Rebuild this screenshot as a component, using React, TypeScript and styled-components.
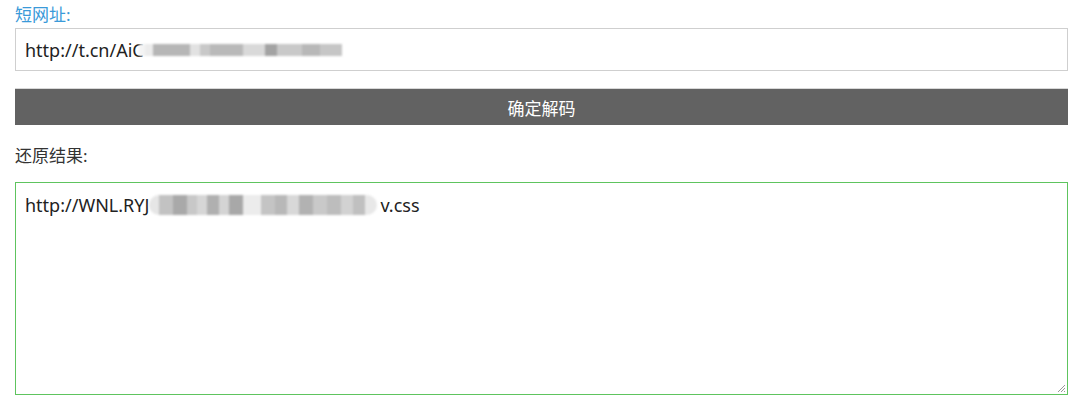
import React from "react";
import styled, { createGlobalStyle } from "styled-components";

const Global = createGlobalStyle`
  html, body { margin: 0; padding: 0; background: #fff; }
  body { font-family: "Noto Sans", "Noto Sans CJK SC", sans-serif; }
`;

const Page = styled.div`
  width: 1080px;
  height: 405px;
  box-sizing: border-box;
  padding: 3px 12px 0 15px;
  display: flex;
  flex-direction: column;
`;

const Label = styled.div<{ $blue?: boolean }>`
  font-size: 17px;
  line-height: 24px;
  color: ${(p) => (p.$blue ? "#3a9ad9" : "#333")};
`;

const InputBox = styled.div`
  margin-top: 1px;
  height: 43px;
  box-sizing: border-box;
  border: 1px solid #cfcfcf;
  padding: 0 9px;
  display: flex;
  align-items: center;
  font-size: 18px;
  color: #222;
`;

const Button = styled.div`
  margin-top: 17px;
  height: 37px;
  background: #626262;
  color: #fff;
  font-size: 17px;
  display: flex;
  align-items: center;
  justify-content: center;
  border-top: 1px solid #d8d8d8;
  box-sizing: border-box;
`;

const ResultLabel = styled(Label)`
  margin-top: 19px;
`;

const ResultBox = styled.div`
  margin-top: 14px;
  height: 213px;
  box-sizing: border-box;
  border: 1px solid #5ec45e;
  padding: 9px 9px;
  font-size: 18px;
  line-height: 26px;
  color: #222;
  position: relative;
  display: flex;
  align-items: flex-start;
`;

const Line = styled.div`
  display: flex;
  align-items: center;
  height: 26px;
`;

const Mosaic = styled.span<{ $w: number; $h: number; $round?: boolean; $overlap?: number }>`
  display: inline-flex;
  width: ${(p) => p.$w}px;
  height: ${(p) => p.$h}px;
  margin: 0 3px 0 ${(p) => -(p.$overlap ?? 0)}px;
  overflow: hidden;
  border-radius: ${(p) => (p.$round ? "10px" : "0")};
  filter: blur(0.9px);
`;

const Cell = styled.span<{ $c: string; $w: number }>`
  display: inline-block;
  flex: none;
  height: 100%;
  width: ${(p) => p.$w}px;
  background: ${(p) => p.$c};
`;

const Grip = styled.svg`
  position: absolute;
  right: 1px;
  bottom: 1px;
`;

const cells1: [string, number][] = [
  ["#f4f4f4", 6], ["#ececec", 8], ["#b6b6b6", 37], ["#e2e2e2", 10], ["#c8c8c8", 10], ["#b9b9b9", 33],
  ["#d9d9d9", 22], ["#a3a3a3", 12], ["#c9c9c9", 25], ["#b8b8b8", 18], ["#c6c6c6", 22],
];

const cells2: [string, number][] = [
  ["#e6e6e6", 10], ["#c2c2c2", 14], ["#a9a9a9", 14], ["#c8c8c8", 10], ["#d6d6d6", 10],
  ["#b0b0b0", 12], ["#d4d4d4", 10], ["#a8a8a8", 14], ["#ececec", 18], ["#c4c4c4", 14],
  ["#b8b8b8", 12], ["#d8d8d8", 12], ["#b2b2b2", 14], ["#c9c9c9", 14], ["#bdbdbd", 14],
  ["#d2d2d2", 12], ["#c0c0c0", 12], ["#e8e8e8", 18],
];

export default function App() {
  return (
    <>
      <Global />
      <Page>
        <Label $blue>短网址:</Label>
        <InputBox>
          http://t.cn/AiC
          <Mosaic $w={203} $h={12} $overlap={5}>
            {cells1.map(([c, w], i) => (
              <Cell key={i} $c={c} $w={w} />
            ))}
          </Mosaic>
        </InputBox>
        <Button>确定解码</Button>
        <ResultLabel>还原结果:</ResultLabel>
        <ResultBox>
          <Line>
            http://WNL.RYJ
            <Mosaic $w={228} $h={20} $round>
              {cells2.map(([c, w], i) => (
                <Cell key={i} $c={c} $w={w} />
              ))}
            </Mosaic>
            v.css
          </Line>
          <Grip width="10" height="10" viewBox="0 0 10 10">
            <path d="M9 2 L2 9 M9 5 L5 9 M9 8 L8 9" stroke="#999" strokeWidth="1" />
          </Grip>
        </ResultBox>
      </Page>
    </>
  );
}
